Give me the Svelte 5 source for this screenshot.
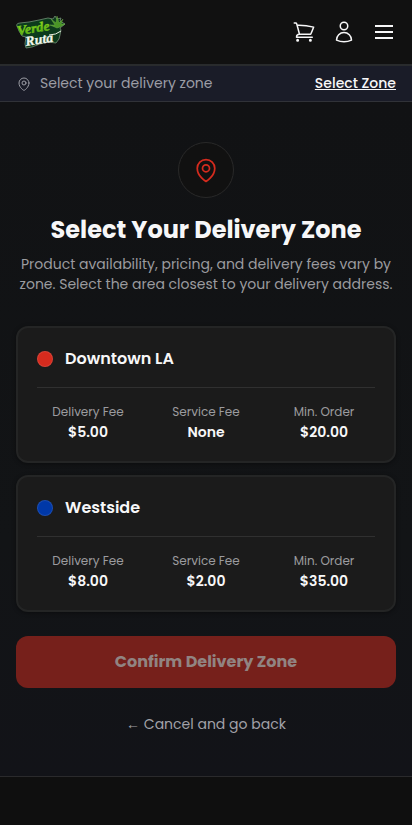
<script lang="ts">
	interface Zone {
		id: string;
		name: string;
		color: string;
		fees: { label: string; value: string }[];
	}

	const zones: Zone[] = [
		{
			id: "downtown",
			name: "Downtown LA",
			color: "#d52b1e",
			fees: [
				{ label: "Delivery Fee", value: "$5.00" },
				{ label: "Service Fee", value: "None" },
				{ label: "Min. Order", value: "$20.00" },
			],
		},
		{
			id: "westside",
			name: "Westside",
			color: "#0038a8",
			fees: [
				{ label: "Delivery Fee", value: "$8.00" },
				{ label: "Service Fee", value: "$2.00" },
				{ label: "Min. Order", value: "$35.00" },
			],
		},
	];
</script>

{#snippet pin(size: number)}
	<svg width={size} height={size} viewBox="0 0 24 24" fill="none" stroke="currentColor" stroke-width="1.5" stroke-linecap="round" stroke-linejoin="round">
		<path d="M15 10.5a3 3 0 1 1-6 0 3 3 0 0 1 6 0Z" />
		<path d="M19.5 10.5c0 7.142-7.5 11.25-7.5 11.25S4.5 17.642 4.5 10.5a7.5 7.5 0 1 1 15 0Z" />
	</svg>
{/snippet}

<div class="page">
	<header>
		<a class="logo" href="#home" aria-label="Verde Ruta">
			<svg width="50" height="34" viewBox="0 0 50 34">
				<defs>
					<linearGradient id="leaf" x1="0" y1="0" x2="0" y2="1">
						<stop offset="0" stop-color="#a4e81c" />
						<stop offset="1" stop-color="#3f9c13" />
					</linearGradient>
				</defs>
				<path d="M.6 10Q1 8 4 8l9-1 10-2 9-2 5 1 2-3 2 3 4-1-1 3 5 3-5 4 1 2-1 5-1 4-3 4-8-1-8 2-8 3-6 1-1-4 1-7-4-1-3-5Z" fill="#0c3b1c" stroke="#7f9d82" stroke-width=".7" stroke-linejoin="round" />
				<path d="M41 13 34 10l5 0-4-6 5 4 1-7 2 7 4-4-2 5 4 0-5 3Z" fill="#499526" stroke="#79b850" stroke-width=".4" />
				<g transform="rotate(-9 25 17)" font-family="Liberation Serif, serif" font-style="italic" font-weight="700">
					<text x="1.500" y="16.500" font-size="13.500" textLength="33" lengthAdjust="spacingAndGlyphs" fill="url(#leaf)" stroke="#76c91b" stroke-width=".4">Verde</text>
					<text x="8" y="28.500" font-size="13.500" textLength="28" lengthAdjust="spacingAndGlyphs" fill="#f1f5ec" stroke="#f1f5ec" stroke-width=".3">Ruta</text>
				</g>
				<path d="M33 20q7 0 12-4" fill="none" stroke="#e9f0e3" stroke-width="1" />
			</svg>
		</a>
		<nav>
			<button aria-label="Cart">
				<svg width="24" height="24" viewBox="0 0 24 24" fill="none" stroke="currentColor" stroke-width="1.5" stroke-linecap="round" stroke-linejoin="round">
					<path d="M2.250 3h1.386c.51 0 .955.343 1.087.835l.383 1.437M7.500 14.250a3 3 0 0 0-3 3h15.750m-12.750-3h11.218c1.121-2.300 2.100-4.684 2.924-7.138a60.114 60.114 0 0 0-16.536-1.840M7.500 14.250 5.106 5.272" />
					<circle cx="5.625" cy="20.250" r=".75" />
					<circle cx="18.375" cy="20.250" r=".75" />
				</svg>
			</button>
			<button aria-label="Account">
				<svg width="24" height="24" viewBox="0 0 24 24" fill="none" stroke="currentColor" stroke-width="1.5" stroke-linecap="round" stroke-linejoin="round">
					<circle cx="12" cy="6" r="3.750" />
					<path d="M4.500 20.100a7.500 7.500 0 0 1 15 0A17.900 17.900 0 0 1 12 21.750c-2.700 0-5.200-.6-7.500-1.650Z" />
				</svg>
			</button>
			<button aria-label="Menu">
				<svg width="24" height="24" viewBox="0 0 24 24" fill="none" stroke="currentColor" stroke-width="2">
					<path d="M3 6h18M3 12h18M3 18h18" />
				</svg>
			</button>
		</nav>
	</header>

	<div class="zone-bar">
		{@render pin(16)}
		<span>Select your delivery zone</span>
		<a href="#zones">Select Zone</a>
	</div>

	<main>
		<div class="badge">{@render pin(28)}</div>
		<h1>Select Your Delivery Zone</h1>
		<p class="intro">
			<span>Product availability, pricing, and delivery fees vary by</span>
			<span>zone. Select the area closest to your delivery address.</span>
		</p>

		<div class="zones" id="zones">
			{#each zones as zone (zone.id)}
				<div class="card">
					<div class="title">
						<span class="dot" style="background-color:{zone.color}"></span>
						<h2>{zone.name}</h2>
					</div>
					<dl>
						{#each zone.fees as fee (fee.label)}
							<div>
								<dt>{fee.label}</dt>
								<dd>{fee.value}</dd>
							</div>
						{/each}
					</dl>
				</div>
			{/each}
		</div>

		<button class="confirm" disabled>Confirm Delivery Zone</button>
		<button class="cancel">← Cancel and go back</button>
	</main>
	<footer></footer>
</div>

<style>
	:global(body) {
		background: #0f0f0f;
	}
	.page {
		min-height: 825px;
		display: flex;
		flex-direction: column;
		font-family: Poppins, "Liberation Sans", sans-serif;
		color: #f7f7f8;
	}
	h1,
	h2,
	p,
	dl,
	dd {
		margin: 0;
	}
	button {
		padding: 0;
		border: none;
		background: none;
		color: inherit;
		font: inherit;
	}
	svg {
		display: block;
		flex: none;
	}
	header {
		box-sizing: border-box;
		height: 66px;
		padding: 0 16px;
		display: flex;
		align-items: center;
		justify-content: space-between;
		background: #111111;
		border-bottom: 2px solid #292b2d;
	}
	nav {
		display: flex;
		gap: 16px;
	}
	.zone-bar {
		box-sizing: border-box;
		height: 36px;
		padding: 0 16px;
		display: flex;
		align-items: center;
		gap: 8px;
		background: #1a1c28;
		border-bottom: 1px solid #303238;
		color: #9c9da5;
		font-size: 14px;
	}
	.zone-bar a {
		margin-left: auto;
		color: #f7f7f8;
		font-weight: 500;
	}
	main {
		box-sizing: border-box;
		height: 674px;
		padding: 40px 16px 0;
		display: flex;
		flex-direction: column;
		align-items: center;
		background: linear-gradient(180deg, #111214, #121416 65%, #121318);
	}
	.badge {
		box-sizing: border-box;
		width: 56px;
		height: 56px;
		display: grid;
		place-items: center;
		border: 1px solid #292929;
		border-radius: 50%;
		background: #111111;
		color: #d52b1e;
	}
	h1 {
		margin-top: 16px;
		font-size: 24px;
		line-height: 32px;
		font-weight: 700;
		white-space: nowrap;
	}
	.intro {
		margin-top: 8px;
		font-size: 14px;
		line-height: 20px;
		color: #9b9b9f;
		text-align: center;
	}
	.intro span {
		display: block;
		white-space: nowrap;
	}
	.zones {
		width: 100%;
		margin-top: 32px;
		display: grid;
		gap: 12px;
	}
	.card {
		padding: 19px;
		border: 2px solid #242525;
		border-radius: 12px;
		background: #1b1b1b;
		box-shadow: 0 1px 4px rgb(0 0 0 / 0.4);
	}
	.title {
		display: flex;
		align-items: center;
		gap: 12px;
	}
	.dot {
		box-sizing: border-box;
		width: 16px;
		height: 16px;
		border: 1px solid rgb(255 255 255 / 0.1);
		border-radius: 50%;
	}
	h2 {
		font-size: 16px;
		line-height: 24px;
		font-weight: 600;
	}
	dl {
		margin-top: 16px;
		padding-top: 16px;
		display: grid;
		grid-template-columns: repeat(3, 1fr);
		gap: 16px;
		border-top: 1px solid #303030;
		text-align: center;
	}
	dt {
		color: #9b9b9f;
		font-size: 12px;
		line-height: 16px;
	}
	dd {
		margin-top: 2px;
		font-size: 14px;
		line-height: 20px;
		font-weight: 600;
	}
	.confirm {
		flex: none;
		width: 100%;
		height: 52px;
		margin-top: 24px;
		border-radius: 12px;
		background: #76201b;
		color: #918482;
		font-size: 16px;
		line-height: 24px;
		font-weight: 700;
	}
	.cancel {
		margin-top: 26px;
		color: #a1a1a8;
		font-size: 14px;
		line-height: 20px;
	}
	footer {
		flex: 1;
		border-top: 1px solid #2a2a2c;
		background: #0f0f0f;
	}
</style>
